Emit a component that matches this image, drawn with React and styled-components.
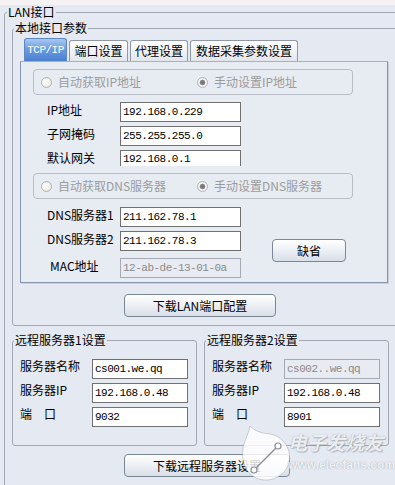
import React from 'react'
import styled, { createGlobalStyle } from 'styled-components'

const GlobalStyle = createGlobalStyle`
  html, body {
    margin: 0;
    padding: 0;
    background: #e5e9f1;
  }
  body {
    font-family: "Noto Sans CJK SC", "Liberation Sans", sans-serif;
    font-size: 12px;
    color: #000;
  }
`

const Page = styled.div`
  position: relative;
  width: 395px;
  height: 485px;
  overflow: hidden;
  background: #e5e9f1;
`

const TopStrip = styled.div`
  height: 5px;
  background: #f4f2f3;
`

const Group = styled.fieldset`
  box-sizing: border-box;
  min-width: 0;
  margin: ${({ $margin }) => $margin || 0};
  padding: ${({ $padding }) => $padding || 0};
  width: ${({ $width }) => $width};
  height: ${({ $height }) => $height || 'auto'};
  border: 1px solid #a2a8b3;
  border-radius: 3px;
`

const Legend = styled.legend`
  margin-left: ${({ $offset }) => $offset || '1px'};
  padding: 0 1px;
  font-size: 12px;
  line-height: 14px;
`

const TabStrip = styled.div`
  display: flex;
  align-items: flex-end;
  gap: 2px;
  height: 23px;
  margin-left: 11px;
`

const Tab = styled.div`
  box-sizing: border-box;
  display: flex;
  align-items: center;
  justify-content: center;
  width: ${({ $w }) => $w};
  height: ${({ $active }) => ($active ? '23px' : '21px')};
  border: 1px solid ${({ $active }) => ($active ? '#5d86c4' : '#8f98a6')};
  border-bottom: none;
  border-radius: 3px 3px 0 0;
  background: ${({ $active }) =>
    $active
      ? 'linear-gradient(#a8c8f0, #6d9de0 45%, #4a7fd0)'
      : 'linear-gradient(#ffffff, #f1f3f6 50%, #e2e6ec)'};
  color: ${({ $active }) => ($active ? '#ffffff' : '#000')};
  font-family: ${({ $mono }) =>
    $mono ? '"Liberation Mono", monospace' : '"Noto Sans CJK SC", sans-serif'};
  font-size: ${({ $mono }) => ($mono ? '11px' : '12px')};
  letter-spacing: ${({ $mono }) => ($mono ? '-0.5px' : '0')};
  line-height: 14px;
`

const Panel = styled.div`
  box-sizing: border-box;
  width: 368px;
  height: 222px;
  margin-left: 7px;
  padding: 7px 0 0 12px;
  border: 1px solid #8795ab;
  border-top-color: #8fb6e4;
  background: #e7ebf2;
  box-shadow: 1px 1px 0 #c9ced8;
`

const RadioBox = styled.div`
  box-sizing: border-box;
  display: grid;
  grid-template-columns: 156px auto;
  align-items: center;
  width: 320px;
  height: 26px;
  padding-left: 7px;
  margin-top: ${({ $mt }) => $mt || 0};
  border: 1px solid #b7bcc5;
  border-radius: 4px;
`

const RadioOption = styled.label`
  display: flex;
  align-items: center;
  gap: 6px;
  color: #9c9c9c;
  line-height: 14px;
`

const RadioDot = styled.span`
  box-sizing: border-box;
  width: 11px;
  height: 11px;
  border-radius: 50%;
  border: 1px solid #b3b3b3;
  background: ${({ $checked }) =>
    $checked
      ? 'radial-gradient(circle, #7a7a7a 0 2px, #a8a8a8 2.6px, #f4f4f4 3.2px)'
      : 'radial-gradient(circle at 40% 40%, #ffffff, #e6e3d6)'};
`

const FieldRow = styled.div`
  display: grid;
  grid-template-columns: ${({ $label }) => $label} ${({ $input }) => $input};
  align-items: start;
  margin-top: ${({ $mt }) => $mt || 0};
  margin-left: ${({ $ml }) => $ml || 0};
`

const FieldLabel = styled.span`
  padding-left: ${({ $indent }) => $indent || 0};
  padding-top: ${({ $top }) => $top || '1px'};
  line-height: 14px;
  white-space: nowrap;
`

const Input = styled.input`
  box-sizing: border-box;
  width: ${({ $w }) => $w};
  height: ${({ $clip }) => ($clip ? '16px' : '20px')};
  margin: 0;
  padding: 0 2px;
  border: 1px solid ${({ disabled }) => (disabled ? '#a5abb4' : '#707070')};
  border-bottom: ${({ $clip }) => ($clip ? 'none' : undefined)};
  background: ${({ disabled }) => (disabled ? '#e8ebf1' : '#ffffff')};
  color: ${({ disabled }) => (disabled ? '#8a8a8a' : '#000')};
  font-family: "Liberation Mono", monospace;
  font-size: 11px;
  letter-spacing: -0.5px;
  outline: none;
`

const DnsSection = styled.div`
  display: flex;
  margin-top: 8px;
`

const DnsFields = styled.div`
  width: 208px;
`

const Button = styled.button`
  box-sizing: border-box;
  display: block;
  width: ${({ $w }) => $w};
  height: 23px;
  margin: ${({ $margin }) => $margin || 0};
  padding: 0;
  border: 1px solid #7c8795;
  border-radius: 4px;
  background: linear-gradient(#ffffff, #eef1f5 45%, #d9dfe8);
  font-family: "Noto Sans CJK SC", sans-serif;
  font-size: 12px;
  color: #000;
`

const RemoteRow = styled.div`
  display: flex;
  gap: 7px;
  margin: 7px 0 0 7px;
`

const Watermark = styled.div`
  position: absolute;
  left: 234px;
  top: 392px;
  display: flex;
  align-items: flex-start;
  pointer-events: none;
`

const WatermarkText = styled.div`
  display: flex;
  flex-direction: column;
  margin: 38px 0 0 -4px;
`

const WmTitle = styled.span`
  font-family: "Noto Sans CJK SC", sans-serif;
  font-size: 19px;
  font-weight: 700;
  font-style: italic;
  line-height: 24px;
  color: rgba(255, 255, 255, 0.85);
  text-shadow: 0 0 1px rgba(90, 100, 120, 0.6), 1px 1px 1px rgba(90, 100, 120, 0.35);
`

const WmUrl = styled.span`
  font-family: "Liberation Sans", sans-serif;
  font-size: 12px;
  font-weight: 700;
  line-height: 16px;
  margin-top: 3px;
  color: rgba(255, 255, 255, 0.85);
  text-shadow: 0 0 1px rgba(90, 100, 120, 0.6);
`

const Logo = () => (
  <svg width="58" height="93" viewBox="0 0 58 93">
    <path
      d="M16 34 C15 40 12 46 10 52 C6 64 10 80 22 86 C36 92 52 84 55 70 C58 56 48 44 36 42 C28 41 22 40 16 34 Z"
      fill="rgba(255,255,255,0.82)"
      stroke="rgba(120,130,150,0.35)"
      strokeWidth="1"
    />
    <line x1="22" y1="76" x2="42" y2="56" stroke="#8a8f98" strokeWidth="1.4" />
    <circle cx="20" cy="78" r="3" fill="#fff" stroke="#8a8f98" strokeWidth="1.2" />
    <circle cx="44" cy="54" r="3" fill="#fff" stroke="#8a8f98" strokeWidth="1.2" />
  </svg>
)

const PanelField = ({ label, value, mt, indent, clip, disabled }) => (
  <FieldRow $label="87px" $input="121px" $mt={mt}>
    <FieldLabel $indent={indent || '14px'}>{label}</FieldLabel>
    <Input $w="121px" value={value} readOnly disabled={disabled} $clip={clip} />
  </FieldRow>
)

const RemoteField = ({ label, value, mt, disabled }) => (
  <FieldRow $label="72px" $input="96px" $mt={mt} $ml="7px">
    <FieldLabel $top="0">{label}</FieldLabel>
    <Input $w="96px" value={value} readOnly disabled={disabled} />
  </FieldRow>
)

const RemoteGroup = ({ title, name, ip, port, nameDisabled }) => (
  <Group $width="185px" $height="113px" $padding="12px 0 0 0">
    <Legend>{title}</Legend>
    <RemoteField label="服务器名称" value={name} disabled={nameDisabled} />
    <RemoteField label="服务器IP" value={ip} mt="4px" />
    <RemoteField label="端　口" value={port} mt="4px" />
  </Group>
)

const RadioPair = ({ first, second, mt }) => (
  <RadioBox $mt={mt}>
    <RadioOption>
      <RadioDot />
      {first}
    </RadioOption>
    <RadioOption>
      <RadioDot $checked />
      {second}
    </RadioOption>
  </RadioBox>
)

export default function App() {
  return (
    <Page>
      <GlobalStyle />
      <TopStrip />
      <Group $margin="0 0 0 4px" $padding="2px 0 0 0" $width="430px" $height="520px">
        <Legend $offset="2px">LAN接口</Legend>

        <Group $margin="0 0 0 7px" $padding="3px 0 8px 0" $width="420px">
          <Legend>本地接口参数</Legend>

          <TabStrip>
            <Tab $w="43px" $active $mono>TCP/IP</Tab>
            <Tab $w="59px">端口设置</Tab>
            <Tab $w="58px">代理设置</Tab>
            <Tab $w="108px">数据采集参数设置</Tab>
          </TabStrip>

          <Panel>
            <RadioPair first="自动获取IP地址" second="手动设置IP地址" />
            <PanelField label="IP地址" value="192.168.0.229" mt="7px" />
            <PanelField label="子网掩码" value="255.255.255.0" mt="4px" />
            <PanelField label="默认网关" value="192.168.0.1" mt="4px" clip />
            <RadioPair first="自动获取DNS服务器" second="手动设置DNS服务器" mt="7px" />
            <DnsSection>
              <DnsFields>
                <PanelField label="DNS服务器1" value="211.162.78.1" />
                <PanelField label="DNS服务器2" value="211.162.78.3" mt="4px" />
                <PanelField
                  label="MAC地址"
                  value="12-ab-de-13-01-0a"
                  mt="7px"
                  indent="17px"
                  disabled
                />
              </DnsFields>
              <Button $w="74px" $margin="32px 0 0 31px">缺省</Button>
            </DnsSection>
          </Panel>

          <Button $w="152px" $margin="11px 0 0 111px">下载LAN端口配置</Button>
        </Group>

        <RemoteRow>
          <RemoteGroup
            title="远程服务器1设置"
            name="cs001.we.qq"
            ip="192.168.0.48"
            port="9032"
          />
          <RemoteGroup
            title="远程服务器2设置"
            name="cs002..we.qq"
            ip="192.168.0.48"
            port="8901"
            nameDisabled
          />
        </RemoteRow>

        <Button $w="166px" $margin="8px 0 0 119px">下载远程服务器设置</Button>
      </Group>

      <Watermark>
        <Logo />
        <WatermarkText>
          <WmTitle>电子发烧友</WmTitle>
          <WmUrl>www.elecfans.com</WmUrl>
        </WatermarkText>
      </Watermark>
    </Page>
  )
}
